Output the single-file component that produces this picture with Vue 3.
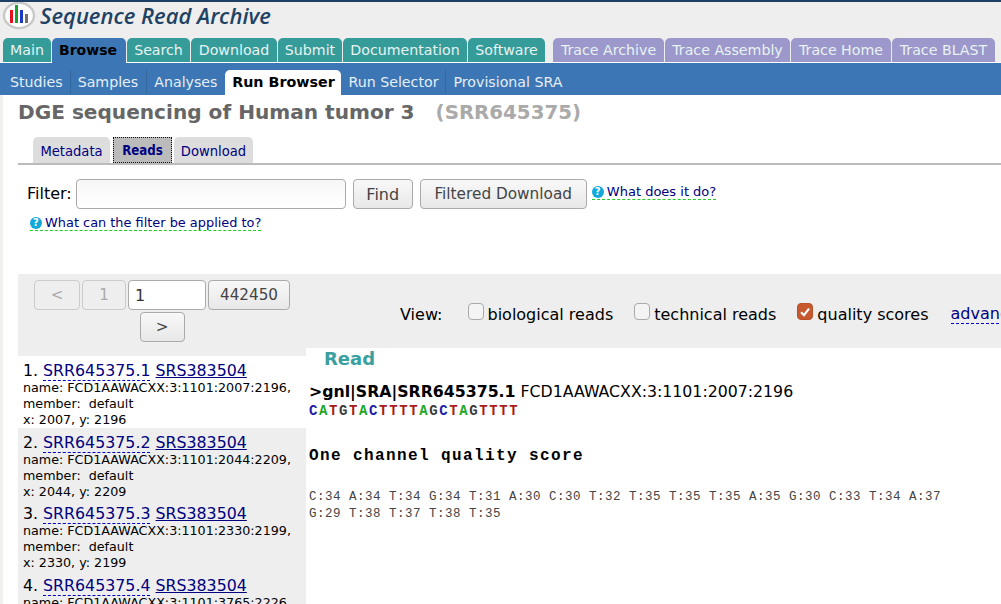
<script setup>
const mainTabs = [
  { label: 'Main', w: 48 }, { label: 'Browse', w: 74, active: true }, { label: 'Search', w: 63 },
  { label: 'Download', w: 86 }, { label: 'Submit', w: 64 }, { label: 'Documentation', w: 124 }, { label: 'Software', w: 77 }
]
const traceTabs = [
  { label: 'Trace Archive', w: 111 }, { label: 'Trace Assembly', w: 125 }, { label: 'Trace Home', w: 100 }, { label: 'Trace BLAST', w: 103 }
]
const subTabs = ['Studies', 'Samples', 'Analyses']
const reads = [
  { n: 1, id: 'SRR645375.1', name: 'FCD1AAWACXX:3:1101:2007:2196,', xy: 'x: 2007, y: 2196' },
  { n: 2, id: 'SRR645375.2', name: 'FCD1AAWACXX:3:1101:2044:2209,', xy: 'x: 2044, y: 2209' },
  { n: 3, id: 'SRR645375.3', name: 'FCD1AAWACXX:3:1101:2330:2199,', xy: 'x: 2330, y: 2199' },
  { n: 4, id: 'SRR645375.4', name: 'FCD1AAWACXX:3:1101:3765:2226,', xy: 'x: 3765, y: 2226' }
]
const colors = { A: '#1fa81f', C: '#1c1ca8', G: '#3a3a3a', T: '#a81c1c' }
const sequence = 'CATGTACTTTTAGCTAGTTTT'.split('')
</script>

<template>
  <div class="page">
    <header class="head">
      <svg class="logo" width="36" height="30" viewBox="0 0 36 30">
        <ellipse cx="19" cy="13.5" rx="15" ry="12.6" fill="#fff" stroke="#c8c8c8" stroke-width="2.4" />
        <rect x="10" y="8" width="3" height="13" fill="#e8101c" />
        <rect x="15" y="3" width="3" height="18" fill="#18a030" />
        <rect x="20" y="8" width="3" height="13" fill="#1c38c8" />
        <rect x="25" y="12" width="3" height="9" fill="#707070" />
      </svg>
      <span class="brand">Sequence Read Archive</span>
    </header>

    <nav class="tabs">
      <a v-for="t in mainTabs" :key="t.label" class="tab" :class="{ on: t.active }" :style="{ width: t.w + 'px' }">{{ t.label }}</a>
      <span class="tab-gap"></span>
      <a v-for="t in traceTabs" :key="t.label" class="tab trace" :style="{ width: t.w + 'px' }">{{ t.label }}</a>
    </nav>

    <nav class="subnav">
      <a v-for="s in subTabs" :key="s" class="sub">{{ s }}</a>
      <a class="sub current">Run Browser</a>
      <a class="sub">Run Selector</a>
      <a class="sub last">Provisional SRA</a>
    </nav>

    <main class="content">
      <h1 class="title">DGE sequencing of Human tumor 3 <span class="acc">(SRR645375)</span></h1>

      <div class="inner-tabs">
        <a class="itab w77">Metadata</a>
        <a class="itab sel">Reads</a>
        <a class="itab w79">Download</a>
      </div>

      <section class="filter">
        <div class="filter-row">
          <label class="flabel">Filter:</label>
          <input class="finput" type="text" />
          <button class="btn find">Find</button>
          <button class="btn fdl">Filtered Download</button>
          <a class="help top"><i class="q">?</i> What does it do?</a>
        </div>
        <a class="help under"><i class="q">?</i> What can the filter be applied to?</a>
      </section>

      <section class="toolbar">
        <div class="pager">
          <button class="pg dis w46">&lt;</button>
          <button class="pg dis w44">1</button>
          <input class="pg-input" type="text" value="1" />
          <button class="pg w82">442450</button>
          <button class="pg w45">&gt;</button>
        </div>
        <div class="view">
          <span class="view-l">View:</span>
          <span class="cb"></span><span class="cb-t t1">biological reads</span>
          <span class="cb"></span><span class="cb-t t2">technical reads</span>
          <span class="cb checked">
            <svg width="14" height="14" viewBox="0 0 14 14"><path d="M3 7.2 L6 10.2 L11 3.6" fill="none" stroke="#fff" stroke-width="2.2" /></svg>
          </span><span class="cb-t t3">quality scores</span>
          <a class="adv">advanced</a>
        </div>
      </section>

      <section class="body">
        <aside class="side">
          <div v-for="r in reads" :key="r.n" class="item" :class="{ first: r.n === 1 }">
            <div class="item-h">{{ r.n }}. <a class="srr">{{ r.id }}</a> <a class="srs">SRS383504</a></div>
            <div class="item-s">name: {{ r.name }}</div>
            <div class="item-s">member:&nbsp; default</div>
            <div class="item-s">{{ r.xy }}</div>
          </div>
        </aside>
        <article class="detail">
          <h2 class="read-h">Read</h2>
          <div class="defline"><b>&gt;gnl|SRA|SRR645375.1</b> FCD1AAWACXX:3:1101:2007:2196</div>
          <div class="seq"><span v-for="(c, i) in sequence" :key="i" :style="{ color: colors[c] }">{{ c }}</span></div>
          <h3 class="q-h">One channel quality score</h3>
          <p class="scores">C:34 A:34 T:34 G:34 T:31 A:30 C:30 T:32 T:35 T:35 T:35 A:35 G:30 C:33 T:34 A:37<br />G:29 T:38 T:37 T:38 T:35</p>
        </article>
      </section>
    </main>
  </div>
</template>

<style>
html, body { margin: 0; overflow: hidden; background: #fff; }
</style>

<style scoped>
.page { width: 1001px; height: 604px; overflow: hidden; font-family: "DejaVu Sans", sans-serif; background: #fff; color: #000; }
.head { height: 36px; border-top: 2px solid #1d3f63; background: #eee; display: flex; align-items: flex-start; }
.logo { flex: none; }
.brand { margin-left: 4px; font: italic 600 22px/26px "Open Sans", sans-serif; color: #1f4264; white-space: nowrap; }
.tabs { display: flex; height: 25px; background: #eee; box-shadow: inset 0 -1px #fff; padding-left: 3px; gap: 1px; align-items: flex-start; }
.tab { box-sizing: border-box; height: 24px; background: #359c99; color: #e8f3f2; font-size: 14.2px; line-height: 25px; text-align: center; border-radius: 5px 5px 0 0; white-space: nowrap; }
.tab.on { height: 25px; background: #3c76b4; color: #000; font-weight: 700; font-size: 14px; padding-right: 2px; }
.tab.trace { background: #9c98cc; }
.tab-gap { width: 6px; }
.subnav { height: 32px; background: #3c76b4; display: flex; align-items: flex-end; padding-left: 3px; }
.sub { color: #e6eef6; font-size: 14.2px; line-height: 24px; height: 24px; padding: 0 7px; margin-bottom: 1px; white-space: nowrap; border-right: 1px solid #35689f; }
.sub.last { border-right: 0; }
.sub:nth-child(2) { padding-right: 8px; }
.sub:nth-child(3) { border-right: 0; padding-right: 8px; }
.sub.current { box-sizing: border-box; width: 116px; text-align: center; background: #fff; color: #000; font-weight: 700; font-size: 14.3px; border: 0; border-radius: 5px 5px 0 0; height: 25px; line-height: 25px; margin-bottom: 0; padding: 0; }
.content { background: #fff; border-left: 3px solid #f0f0ee; padding-left: 15px; height: 509px; overflow: hidden; }
.title { margin: 0; padding-top: 5px; height: 36px; box-sizing: border-box; font-size: 20.1px; line-height: 24px; color: #666; font-weight: 700; white-space: pre-wrap; }
.acc { color: #aaa; margin-left: 14px; font-size: 19.8px; }
.inner-tabs { height: 34px; padding-left: 15px; padding-top: 6px; box-sizing: border-box; border-bottom: 2px solid #bbb; display: flex; gap: 2px; }
.itab { height: 26px; box-sizing: border-box; background: #ddd; border-radius: 5px 5px 0 0; font-family: "DejaVu Sans Condensed", "DejaVu Sans", sans-serif; font-stretch: condensed; font-size: 14.6px; line-height: 28px; color: #000080; text-align: center; }
.w77 { width: 77px; }
.w79 { width: 79px; }
.itab.sel { width: 59px; margin-left: 1px; background: #bbb; font-weight: 700; font-size: 13.2px; outline: 1px dotted #000080; outline-offset: -1px; border-radius: 0; }
.filter { height: 109px; padding: 14px 0 0 9px; box-sizing: border-box; }
.filter-row { display: flex; align-items: flex-start; }
.flabel { font-size: 16px; line-height: 30px; margin-right: 4px; }
.finput { width: 270px; height: 30px; box-sizing: border-box; border: 1px solid #aaa; border-radius: 4px; background: linear-gradient(#f7f7f7, #fff); margin: 0; }
.btn { height: 30px; box-sizing: border-box; border: 1px solid #aaa; border-radius: 4px; background: linear-gradient(#f8f8f8, #e8e8e8); font: 16px "DejaVu Sans", sans-serif; color: #444; padding: 0; }
.find { width: 60px; margin-left: 7px; }
.fdl { width: 167px; margin-left: 7px; font-size: 15.3px; }
.help { font-size: 12.9px; line-height: 15px; color: #000080; border-bottom: 1px dashed #22cc22; display: inline-block; }
.help.top { margin: 5px 0 0 5px; font-size: 13px; }
.help.under { margin: 6px 0 0 3px; }
.q { display: inline-block; width: 12px; height: 12px; margin-right: -1px; border-radius: 50%; background: #12a8dc; color: #fff; font: 700 10px/12px "DejaVu Sans", sans-serif; text-align: center; vertical-align: 1px; }
.toolbar { height: 74px; background: #eee; display: flex; }
.pager { width: 272px; margin-left: 8px; padding-top: 6px; display: flex; flex-wrap: wrap; justify-content: center; gap: 2px; align-content: flex-start; flex: none; }
.pg { height: 30px; box-sizing: border-box; border: 1px solid #aaa; border-radius: 4px; background: linear-gradient(#f8f8f8, #e8e8e8); font: 15.2px "DejaVu Sans", sans-serif; color: #444; padding: 0; }
.pg.dis { color: #aaa; border-color: #ccc; background: #eee; }
.w46 { width: 46px; }
.w44 { width: 44px; }
.w82 { width: 82px; }
.w45 { width: 45px; }
.pg-input { width: 78px; height: 30px; box-sizing: border-box; border: 1px solid #aaa; border-radius: 4px; background: #fff; padding: 0 6px; font: 16px "DejaVu Sans", sans-serif; color: #333; margin: 0; }
.view { display: flex; align-items: center; height: 30px; margin-top: 25px; margin-left: 102px; white-space: nowrap; font-size: 16px; }
.view-l { margin-right: 26px; }
.cb { width: 16px; height: 17px; box-sizing: border-box; border: 1px solid #aaa; border-radius: 4px; background: #f4f4f4; margin-right: 4px; margin-top: -5px; display: inline-flex; align-items: center; justify-content: center; flex: none; }
.cb.checked { background: #c65a2e; border-color: #b85028; }
.t1 { margin-left: -1px; margin-right: 21px; }
.t2 { margin-right: 21px; }
.t3 { margin-right: 22px; }
.adv { color: #000080; border-bottom: 1px dashed #0000cc; line-height: 18px; }
.body { display: flex; }
.side { width: 288px; flex: none; background: #eee; padding-top: 8px; }
.item { height: 71.6px; box-sizing: border-box; padding: 6px 0 0 5px; }
.item.first { background: #fff; }
.item-h { font-size: 15.8px; line-height: 18px; white-space: nowrap; }
.srr { color: #000080; border-bottom: 1px dashed #0000cc; }
.srs { color: #000080; text-decoration: underline; }
.item-s { font-size: 12.7px; line-height: 16px; white-space: nowrap; }
.detail { flex: 1; padding-left: 3px; }
.read-h { margin: 1px 0 0 15px; font-size: 18px; line-height: 20px; color: #39a09f; font-weight: 700; }
.defline { margin-top: 14px; font-size: 15.75px; line-height: 18px; white-space: nowrap; }
.seq { margin-top: 2px; font: 700 14px/16px "Liberation Mono", monospace; letter-spacing: 1.6px; }
.q-h { margin: 28px 0 0; font: 700 16px/18px "Liberation Mono", monospace; letter-spacing: 1.4px; }
.scores { margin: 24px 0 0; font: 12.5px/17px "Liberation Mono", monospace; letter-spacing: 0.5px; color: #444; white-space: nowrap; }
</style>
